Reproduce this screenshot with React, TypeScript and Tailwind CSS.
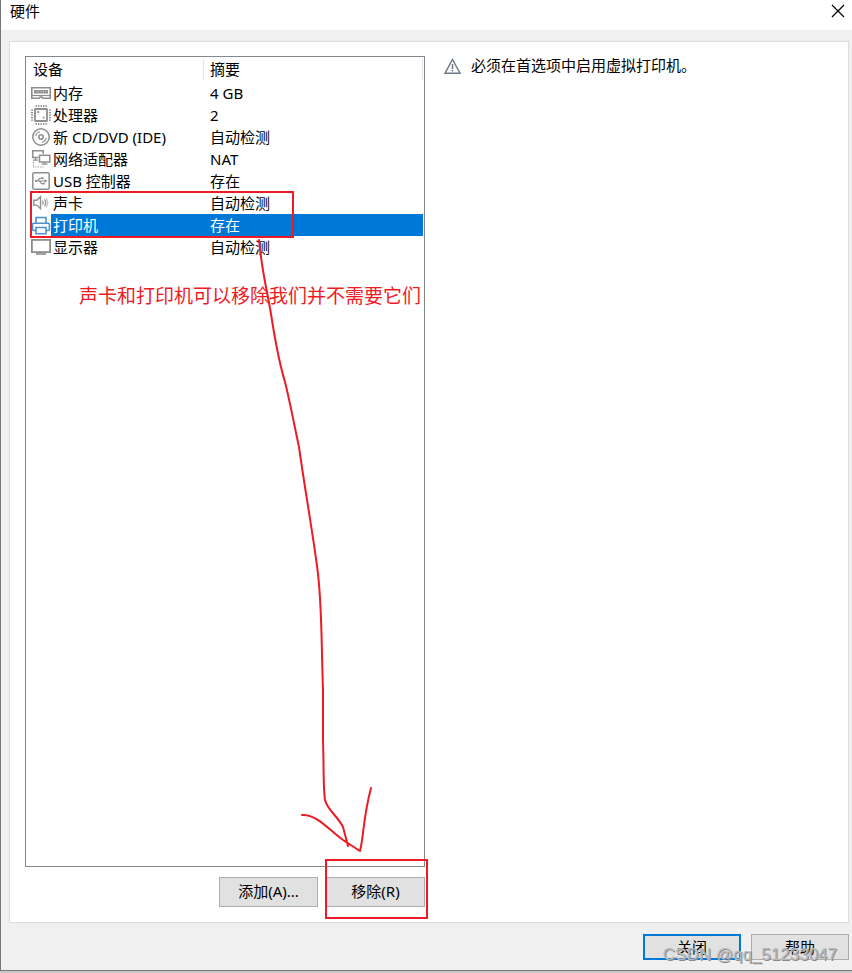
import React, { useState } from 'react';

type IconName = 'memory' | 'cpu' | 'disc' | 'network' | 'usb' | 'sound' | 'printer' | 'display';

interface Device {
  icon: IconName;
  name: string;
  summary: string;
}

const devices: Device[] = [
  { icon: 'memory', name: '内存', summary: '4 GB' },
  { icon: 'cpu', name: '处理器', summary: '2' },
  { icon: 'disc', name: '新 CD/DVD (IDE)', summary: '自动检测' },
  { icon: 'network', name: '网络适配器', summary: 'NAT' },
  { icon: 'usb', name: 'USB 控制器', summary: '存在' },
  { icon: 'sound', name: '声卡', summary: '自动检测' },
  { icon: 'printer', name: '打印机', summary: '存在' },
  { icon: 'display', name: '显示器', summary: '自动检测' },
];

const iconShapes: Record<IconName, React.ReactNode> = {
  memory: (
    <>
      <path d="M0.8 5.8h18.4v10.4h-7.4l-1-1.2H9.2l-1 1.2H0.8z" strokeWidth="1.6" />
      <path d="M1 13.5h18" strokeWidth="1.2" />
      <path d="M3.7 8.7h3v2h-3zM8.5 8.7h3v2h-3zM13.3 8.7h3v2h-3z" strokeWidth="1.5" />
    </>
  ),
  cpu: (
    <>
      <rect x="4" y="5" width="12" height="12" rx="0.5" strokeWidth="1.8" />
      <path d="M4.5 2h11.5M4.5 20h11.5" strokeWidth="2.2" strokeDasharray="1.3 1.2" />
      <path d="M1 5.5v11.5M19 5.5v11.5" strokeWidth="2.2" strokeDasharray="1.3 1.2" />
      <path d="M6.3 8h1.8M11.7 13.7h1.8" strokeWidth="1.8" />
    </>
  ),
  disc: (
    <>
      <circle cx="10" cy="11" r="8.2" strokeWidth="1.5" />
      <circle cx="10" cy="11" r="2.2" strokeWidth="1.6" />
      <path d="M4.8 10.2A5.4 5.4 0 0 1 9 5.8M15.2 11.8A5.4 5.4 0 0 1 11 16.2" strokeWidth="1.1" />
    </>
  ),
  network: (
    <>
      <path d="M7.5 9.5H1.7V2.7h10.5V6" strokeWidth="1.5" />
      <rect x="8.5" y="7.3" width="10.3" height="6.7" strokeWidth="1.5" />
      <path d="M13.5 14v2M10.5 16.2h6" strokeWidth="1.3" />
      <path d="M4.5 10v2.2M2 12.2h5" strokeWidth="1.3" />
      <path d="M2.5 14v4M2 19h10.5" strokeWidth="1.2" strokeDasharray="1.2 1.2" />
    </>
  ),
  usb: (
    <>
      <rect x="1.8" y="2.8" width="16.4" height="16.4" rx="1.5" strokeWidth="1.5" />
      <path d="M5 11h10M6.5 11l2.2-2.7h2M8.5 11l2 2.7h2" strokeWidth="1.2" />
      <path d="M13.6 9.2v3.6L16.5 11zM4 10h2v2H4zM10.5 7.3h2v2h-2zM12 12.8h1.8v1.8H12z" fill="currentColor" stroke="none" />
    </>
  ),
  sound: (
    <>
      <path d="M2.8 8.3h3L9.5 4.7v12L5.8 13.1h-3z" strokeWidth="1.4" />
      <path d="M11.5 8.7q1.5 2 0 4M13.5 7.3q2.5 3.4 0 6.8" strokeWidth="1.2" />
      <path d="M15.3 6q3 4.7 0 9.4" strokeWidth="0.7" />
    </>
  ),
  printer: (
    <>
      <path d="M5 9V3.5h10V9" strokeWidth="1.6" />
      <path d="M5 16.5H2.6q-1 0-1-1v-5.3q0-1 1-1h14.8q1 0 1 1v5.3q0 1-1 1H15" strokeWidth="1.6" />
      <path d="M5 13.5h10v6.2H5z" strokeWidth="1.6" />
    </>
  ),
  display: (
    <>
      <rect x="0.9" y="3.9" width="18.2" height="12.2" strokeWidth="1.8" />
      <path d="M5 18h10" strokeWidth="1.6" />
    </>
  ),
};

const DeviceIcon: React.FC<{ name: IconName; active: boolean }> = ({ name, active }) => (
  <svg
    viewBox="0 0 20 22"
    aria-hidden="true"
    className={`h-[22px] w-5 shrink-0 ${active ? 'text-[#4a93cf]' : 'text-[#8e8e8e]'}`}
    fill="none"
    stroke="currentColor"
  >
    {iconShapes[name]}
  </svg>
);

const DialogButton: React.FC<{ children: React.ReactNode; primary?: boolean; tall?: boolean }> = ({
  children,
  primary,
  tall,
}) => (
  <button
    type="button"
    className={`flex items-center justify-center bg-[#e1e1e1] ${tall ? 'h-[30px] w-[99px] pb-[2px]' : 'h-[26px] w-[98px]'} ${
      primary ? 'border-2 border-[#0078d7]' : 'border border-[#adadad]'
    }`}
  >
    {children}
  </button>
);

// Hand-drawn marks that lie over the dialog
const Annotations: React.FC = () => (
  <div className="pointer-events-none absolute inset-0 overflow-hidden">
    <svg width="852" height="973" aria-hidden="true" className="max-w-none" fill="none" stroke="#ed1c24" strokeWidth="2">
      <rect x="31" y="192" width="262" height="45" />
      <rect x="326" y="860" width="101" height="58" />
      <path
        strokeLinecap="round"
        strokeLinejoin="round"
        d="M259 240C262 272 267 290 271 314C275 340 279 362 285 382C290 402 294 424 299 447C305 490 312 528 317 566C322 600 321 632 323 690V740C324 770 323 786 325 800C328 811 337 815 343 827L348 846M302 815C317 814 330 831 343 840L360 851C364 835 363 818 371 788"
      />
    </svg>
    <p className="absolute left-[79px] top-[284px] whitespace-nowrap text-[19px] leading-6 text-[#ed1c24]">
      声卡和打印机可以移除我们并不需要它们
    </p>
  </div>
);

const App: React.FC = () => {
  const [selected, setSelected] = useState(6);

  return (
    <div className="relative flex min-h-screen flex-col bg-[#c8c8c8] pb-[2px] font-['Noto_Sans','Noto_Sans_CJK_SC',sans-serif] text-[15px] leading-5 text-black">
      <div className="flex flex-1 flex-col border-b border-l border-[#777777] bg-[#f0f0f0]">
        {/* Title bar */}
        <header className="flex h-[30px] items-center justify-between bg-white pb-2 pl-[9px] pr-[7px]">
          <h1>硬件</h1>
          <button type="button" aria-label="关闭窗口">
            <svg viewBox="0 0 14 14" className="h-[14px] w-[14px]" stroke="#000000" strokeWidth="1.2">
              <path d="M1 1l12 12M13 1L1 13" />
            </svg>
          </button>
        </header>

        <main className="ml-2 mr-[3px] mt-[11px] flex flex-1 gap-[19px] border border-[#dcdcdc] bg-white px-[15px] pb-[15px] pt-[14px]">
          {/* Device list */}
          <section className="flex w-[400px] shrink-0 flex-col">
            <div className="flex-1 border border-[#828790] pr-px">
              <table className="w-full table-fixed border-collapse text-left">
                <thead>
                  <tr className="h-[25px]">
                    <th className="w-[178px] p-0 pl-[7px] font-normal">
                      <span className="block border-r border-[#e5e5e5] pb-px">设备</span>
                    </th>
                    <th className="p-0 pl-[6px] font-normal">
                      <span className="block border-r border-[#e5e5e5] pb-px">摘要</span>
                    </th>
                  </tr>
                </thead>
                <tbody>
                  {devices.map((device, index) => {
                    const active = index === selected;
                    return (
                      <tr key={device.name} className="h-[22px] cursor-default" onClick={() => setSelected(index)}>
                        <td className="p-0 pl-[5px]">
                          <div className="flex">
                            <DeviceIcon name={device.icon} active={active} />
                            <span className={`flex-1 pl-[2px] leading-[22px] ${active ? 'bg-[#0078d7] text-white' : ''}`}>
                              {device.name}
                            </span>
                          </div>
                        </td>
                        <td className={`p-0 pl-[6px] leading-[22px] ${active ? 'bg-[#0078d7] text-white' : ''}`}>
                          {device.summary}
                        </td>
                      </tr>
                    );
                  })}
                </tbody>
              </table>
            </div>
            <div className="mt-[10px] flex justify-end gap-2">
              <DialogButton tall>添加(A)...</DialogButton>
              <DialogButton tall>移除(R)</DialogButton>
            </div>
          </section>

          {/* Device details */}
          <section className="flex flex-1 items-start gap-[10px]">
            <svg viewBox="0 0 17 20" aria-hidden="true" className="h-5 w-[17px] shrink-0" fill="none" stroke="#6f7b87">
              <path d="M8.5 3.5L16 17.2H1z" strokeWidth="1.5" />
              <path d="M8.5 8v5M8.5 14v1.5" strokeWidth="1.5" />
            </svg>
            <p className="leading-[18px]">必须在首选项中启用虚拟打印机。</p>
          </section>
        </main>

        <footer className="flex justify-end gap-[10px] pb-[10px] pr-[3px] pt-[11px]">
          <DialogButton primary>关闭</DialogButton>
          <DialogButton>帮助</DialogButton>
        </footer>
      </div>

      <Annotations />
      <span className="pointer-events-none absolute bottom-[8px] right-[15px] font-['Liberation_Sans',sans-serif] text-[17px] leading-5 text-[#b9b9b9] [text-shadow:1px_1px_0_#8a8a8a]">
        CSDN @qq_51233047
      </span>
    </div>
  );
};

export default App;
